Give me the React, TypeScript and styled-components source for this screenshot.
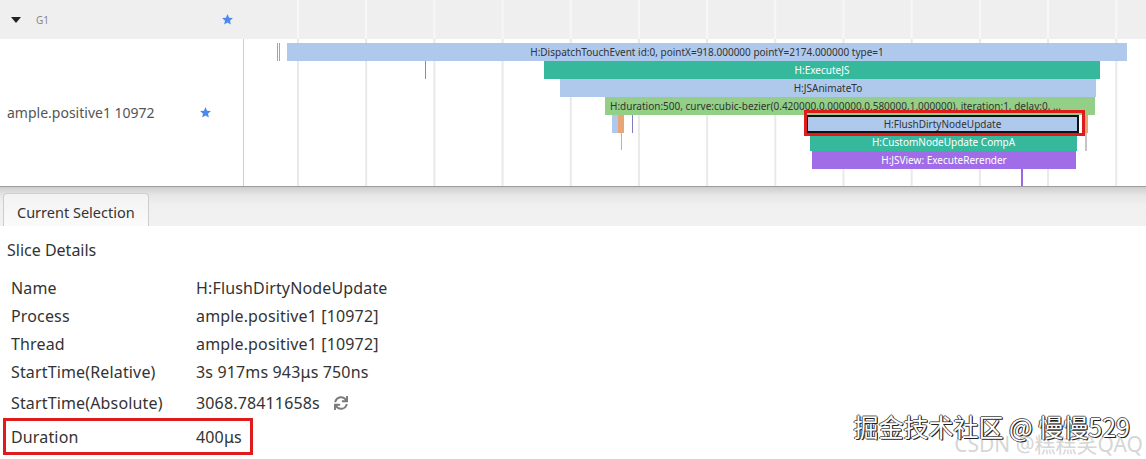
import React from "react";
import styled, { createGlobalStyle } from "styled-components";
import { FaSync } from "react-icons/fa";

const GlobalStyle = createGlobalStyle`
  html, body { margin: 0; padding: 0; background: #fff; }
  body { font-family: "Noto Sans", "Noto Sans CJK SC", sans-serif; color: #333; }
`;

const Page = styled.div`
  position: relative;
  width: 1146px;
  height: 459px;
  overflow: hidden;
  display: flex;
  flex-direction: column;
`;

const TracePanel = styled.div`
  display: flex;
  flex-direction: column;
  height: 186px;
  border-bottom: 1px solid #9c9c9c;
`;

const GroupRow = styled.div`
  display: flex;
  height: 39px;
  background: #efefef;
`;

const TrackRow = styled.div`
  display: flex;
  flex: 1;
  background: #fff;
`;

const LeftCol = styled.div<{ $divider?: boolean }>`
  width: 244px;
  flex-shrink: 0;
  display: flex;
  align-items: center;
  box-sizing: border-box;
  border-right: 1px solid ${(p) => (p.$divider ? "#cfcfcf" : "transparent")};
`;

const Caret = styled.span`
  width: 0;
  height: 0;
  margin: 0 15px 0 11px;
  border-left: 5px solid transparent;
  border-right: 5px solid transparent;
  border-top: 6px solid #222;
`;

const GroupName = styled.span`
  font-size: 10px;
  color: #888;
  flex: 1;
`;

const TrackName = styled.span`
  font-size: 14px;
  color: #555;
  padding-left: 7px;
  flex: 1;
`;

const Star = styled.svg<{ $right: number }>`
  width: 13px;
  height: 13px;
  margin-right: ${(p) => p.$right}px;
  fill: #4a89ef;
`;

const Canvas = styled.div<{ $line: string }>`
  position: relative;
  flex: 1;
  background-image: linear-gradient(to right, ${(p) => p.$line} 0 2px, transparent 2px);
  background-size: 68.2px 100%;
  background-position: 53px 0;
  background-repeat: repeat-x;
`;

const Slice = styled.div<{ $bg: string; $fg: string; $left?: boolean; $framed?: boolean }>`
  position: absolute;
  height: 18px;
  box-sizing: border-box;
  background: ${(p) => p.$bg};
  color: ${(p) => p.$fg};
  font-size: 10px;
  line-height: ${(p) => (p.$framed ? "14px" : "18px")};
  white-space: nowrap;
  overflow: hidden;
  text-align: ${(p) => (p.$left ? "left" : "center")};
  padding: 0 ${(p) => (p.$left ? "5px" : "0")};
  border: ${(p) => (p.$framed ? "2px solid #111" : "none")};
`;

const Mark = styled.div<{ $bg: string }>`
  position: absolute;
  background: ${(p) => p.$bg};
`;

const Highlight = styled.div`
  position: absolute;
  box-sizing: border-box;
  border: 3px solid #e01b1b;
`;

const TabBar = styled.div`
  height: 39px;
  display: flex;
  align-items: flex-end;
  padding-left: 3px;
  background: linear-gradient(#cdcdcd 0, #e6e6e6 8px, #f0f0f0 18px, #f1f1f1 100%);
`;

const Tab = styled.div`
  height: 33px;
  box-sizing: border-box;
  padding: 3px 13px 0;
  display: flex;
  align-items: center;
  font-size: 14.5px;
  color: #333;
  border: 1px solid #cdcdcd;
  border-bottom: none;
  border-radius: 4px 4px 0 0;
  background: linear-gradient(#f3f3f3, #fafafa);
`;

const Details = styled.div`
  flex: 1;
  background: #fff;
  display: flex;
  flex-direction: column;
`;

const DetailsTitle = styled.div`
  font-size: 16px;
  color: #333;
  padding: 12px 0 0 7px;
  height: 36px;
  line-height: 24px;
  box-sizing: border-box;
  margin-bottom: 12px;
`;

const Row = styled.div<{ $h: number; $marked?: boolean }>`
  display: flex;
  align-items: center;
  height: ${(p) => p.$h}px;
  margin-left: 3px;
  margin-top: ${(p) => (p.$marked ? "-2px" : "0")};
  padding-left: 8px;
  width: ${(p) => (p.$marked ? "250px" : "auto")};
  box-sizing: border-box;
  box-shadow: ${(p) => (p.$marked ? "inset 0 0 0 3px #e01b1b" : "none")};
  font-size: 16px;
  letter-spacing: 0.15px;
  color: #333;
`;

const Label = styled.span`
  width: 185px;
  flex-shrink: 0;
`;

const Value = styled.span`
  display: flex;
  align-items: center;
  gap: 14px;
  white-space: nowrap;
`;

const SyncIcon = styled(FaSync)`
  color: #7a7a7a;
  width: 14px;
  height: 14px;
`;

const Watermark = styled.div`
  position: absolute;
  right: 0;
  bottom: 0;
  width: 320px;
  height: 50px;
  pointer-events: none;
`;

const MarkBack = styled.span`
  position: absolute;
  right: 3px;
  bottom: 1px;
  font-size: 21px;
  color: #d6d6d6;
  font-family: "Noto Sans", "Noto Sans CJK SC", sans-serif;
  white-space: nowrap;
`;

const MarkFront = styled.span`
  position: absolute;
  right: 16px;
  bottom: 15px;
  font-size: 25px;
  color: #fff;
  font-family: "Noto Sans CJK SC", sans-serif;
  white-space: nowrap;
  text-shadow: -1px 0 0 #444, 1px 1px 0 #222, 0 -1px 0 #666, 1px 0 0 #333;
`;

const StarPath = () => (
  <path d="M12 2l2.9 6.6 7.1.7-5.4 4.8 1.6 7-6.2-3.7-6.2 3.7 1.6-7L2 9.3l7.1-.7z" />
);

type SliceDef = {
  x: number;
  w: number;
  row: number;
  bg: string;
  fg: string;
  text: string;
  left?: boolean;
  framed?: boolean;
};

const BLUE = "#afc9ed";
const TEAL = "#36b89c";
const GREEN = "#93cf87";
const PURPLE = "#a06ce8";
const ORANGE = "#e8a676";

const slices: SliceDef[] = [
  { x: 43, w: 840, row: 0, bg: BLUE, fg: "#333", text: "H:DispatchTouchEvent id:0, pointX=918.000000 pointY=2174.000000 type=1" },
  { x: 300, w: 556, row: 1, bg: TEAL, fg: "#fff", text: "H:ExecuteJS" },
  { x: 316, w: 536, row: 2, bg: BLUE, fg: "#333", text: "H:JSAnimateTo" },
  {
    x: 361,
    w: 490,
    row: 3,
    bg: GREEN,
    fg: "#333",
    left: true,
    text: "H:duration:500, curve:cubic-bezier(0.420000,0.000000,0.580000,1.000000), iteration:1, delay:0, ...",
  },
  { x: 562, w: 273, row: 4, bg: BLUE, fg: "#333", text: "H:FlushDirtyNodeUpdate", framed: true },
  { x: 566, w: 267, row: 5, bg: TEAL, fg: "#fff", text: "H:CustomNodeUpdate CompA" },
  { x: 568, w: 264, row: 6, bg: PURPLE, fg: "#fff", text: "H:JSView: ExecuteRerender" },
];

const marks = [
  { x: 33, y: 4, w: 1, h: 18, bg: "#8fb68b" },
  { x: 35, y: 4, w: 1, h: 18, bg: "#8fb68b" },
  { x: 181, y: 22, w: 1, h: 18, bg: TEAL },
  { x: 368, y: 76, w: 6, h: 18, bg: BLUE },
  { x: 374, y: 76, w: 6, h: 18, bg: ORANGE },
  { x: 377, y: 94, w: 1, h: 17, bg: ORANGE },
  { x: 388, y: 76, w: 1, h: 18, bg: "#7c7cc4" },
  { x: 838, y: 76, w: 6, h: 18, bg: ORANGE },
  { x: 841, y: 94, w: 2, h: 18, bg: "#c4c4c4" },
  { x: 777, y: 130, w: 2, h: 17, bg: "#9a68e2" },
];

const details = [
  { label: "Name", value: "H:FlushDirtyNodeUpdate", h: 28 },
  { label: "Process", value: "ample.positive1 [10972]", h: 28 },
  { label: "Thread", value: "ample.positive1 [10972]", h: 28 },
  { label: "StartTime(Relative)", value: "3s 917ms 943μs 750ns", h: 28 },
  { label: "StartTime(Absolute)", value: "3068.78411658s", h: 34, sync: true },
  { label: "Duration", value: "400μs", h: 37, marked: true },
];

export default function App() {
  return (
    <Page>
      <GlobalStyle />
      <TracePanel>
        <GroupRow>
          <LeftCol>
            <Caret />
            <GroupName>G1</GroupName>
            <Star $right={9} viewBox="0 0 24 24">
              <StarPath />
            </Star>
          </LeftCol>
          <Canvas $line="#f7f7f7" />
        </GroupRow>
        <TrackRow>
          <LeftCol $divider>
            <TrackName>ample.positive1 10972</TrackName>
            <Star $right={31} viewBox="0 0 24 24">
              <StarPath />
            </Star>
          </LeftCol>
          <Canvas $line="#e9e9e9">
            {marks.map((m, i) => (
              <Mark key={i} $bg={m.bg} style={{ left: m.x, top: m.y, width: m.w, height: m.h }} />
            ))}
            {slices.map((s) => (
              <Slice
                key={s.text}
                $bg={s.bg}
                $fg={s.fg}
                $left={s.left}
                $framed={s.framed}
                style={{ left: s.x, width: s.w, top: 4 + s.row * 18 }}
              >
                {s.text}
              </Slice>
            ))}
            <Highlight style={{ left: 560, top: 71, width: 281, height: 26 }} />
          </Canvas>
        </TrackRow>
      </TracePanel>
      <TabBar>
        <Tab>Current Selection</Tab>
      </TabBar>
      <Details>
        <DetailsTitle>Slice Details</DetailsTitle>
        {details.map((d) => (
          <Row key={d.label} $h={d.h} $marked={d.marked}>
            <Label>{d.label}</Label>
            <Value>
              {d.value}
              {d.sync && <SyncIcon />}
            </Value>
          </Row>
        ))}
      </Details>
      <Watermark>
        <MarkBack>CSDN @糕糕笑QAQ</MarkBack>
        <MarkFront>掘金技术社区 @ 慢慢529</MarkFront>
      </Watermark>
    </Page>
  );
}
